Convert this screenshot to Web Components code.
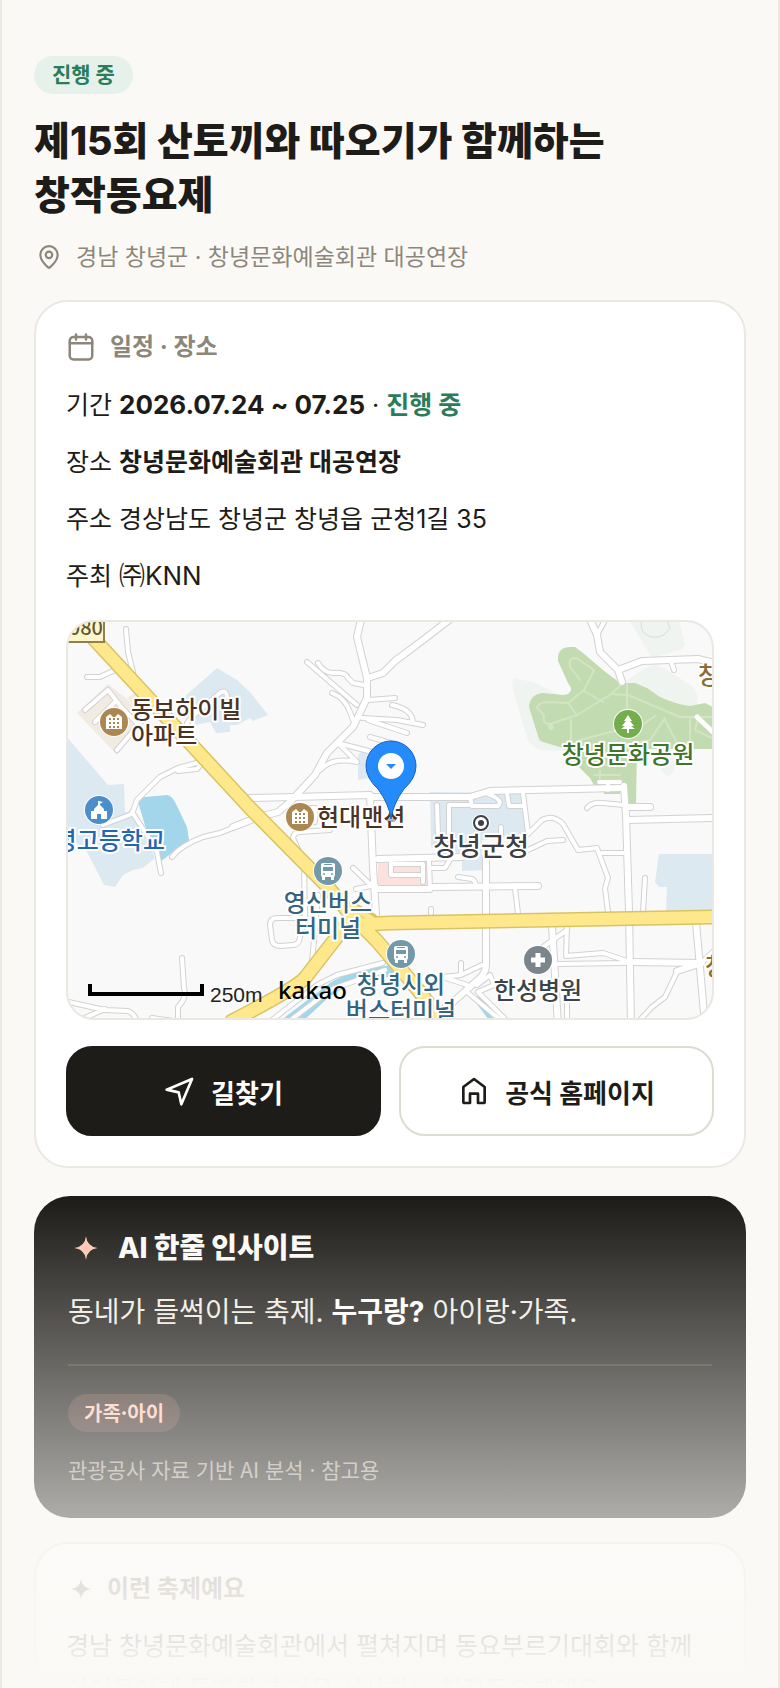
<!DOCTYPE html>
<html lang="ko">
<head>
<meta charset="UTF-8">
<meta name="viewport" content="width=device-width, initial-scale=1">
<title>제15회 산토끼와 따오기가 함께하는 창작동요제</title>
<style>
  body {
    margin: 0;
    background: #fbf9f6;
    color: #1e1c18;
    font-family: Inter, "Noto Sans CJK KR", sans-serif;
    word-break: keep-all;
  }
</style>
</head>
<body>

<festival-page>
  <festival-header badge="진행 중" place="경남 창녕군 · 창녕문화예술회관 대공연장">제15회 산토끼와 따오기가 함께하는 창작동요제</festival-header>

  <info-card heading="일정 · 장소" icon="calendar">
    <info-row label="기간"><b class="latin">2026.07.24 ~ 07.25</b> · <b class="live">진행 중</b></info-row>
    <info-row label="장소"><b>창녕문화예술회관 대공연장</b></info-row>
    <info-row label="주소">경상남도 창녕군 창녕읍 군청1길 35</info-row>
    <info-row label="주최"><span class="latin">㈜KNN</span></info-row>
    <place-map slot="media"></place-map>
    <action-button slot="actions" icon="send" primary>길찾기</action-button>
    <action-button slot="actions" icon="home" href="#home">공식 홈페이지</action-button>
  </info-card>

  <insight-card heading="AI 한줄 인사이트" tag="가족·아이" note="관광공사 자료 기반 AI 분석 · 참고용">동네가 들썩이는 축제. <b>누구랑?</b> 아이랑·가족.</insight-card>

  <info-card heading="이런 축제예요" icon="spark">
    <info-text>경남 창녕문화예술회관에서 펼쳐지며 동요부르기대회와 함께 아이들에게 특별한 추억을 선사하는 창작동요제예요.</info-text>
  </info-card>
</festival-page>

<template id="place-map">
  <style>
    :host {
      display: block;
      border: 2px solid #ebe7e1;
      border-radius: 28px;
      overflow: hidden;
      background: #f9f9f9;
    }
    svg { display: block; width: 100%; height: auto; }
    text {
      font-family: "Noto Sans CJK KR", sans-serif;
      font-size: 24px;
      font-weight: 500;
      stroke: #fff;
      stroke-width: 4px;
      stroke-linejoin: round;
      paint-order: stroke;
    }
    .mid { text-anchor: middle; }
    .end { text-anchor: end; }
    .big { font-size: 26px; }
    .home { fill: #4b3324; }
    .bus { fill: #336580; }
    .shop { fill: #8a6c38; }
    .plain { stroke: none; font-weight: 400; }
    .scale { font-family: "Liberation Sans", sans-serif; font-size: 21px; }
    .brand { font-family: "Noto Sans", sans-serif; font-weight: 500; }
    .lines { fill: none; stroke-linecap: round; stroke-linejoin: round; }
  </style>
  <svg viewBox="68 622 644 396" role="img" aria-label="창녕문화예술회관 지도">
    <defs>
      <g id="wide">
        <path d="M362 615L357 637L367 678V698L353 727L327 753L315 775L290 802L278 812L256 818L233 827"/>
        <path d="M449 620L427 637L395 661L383 673L368 678"/>
        <path d="M250 798L370 795L373 867L376 914"/>
        <path d="M374 797L470 797L490 791L620 788"/>
        <path d="M624 786L626 815L629 912L631 1025"/>
        <path d="M486 858V965Q486 972 480 978L453 1002L436 1014"/>
        <path d="M628 807H650M628 820L715 818M633 962L702 963L677 971"/>
        <path d="M552 926L558 1025M696 922L705 1025"/>
        <path d="M377 889H427M432 887L538 886M378 859L462 857"/>
        <path d="M588 615L597 635L600 652L618 670L622 682M618 670L642 661L698 659L715 663"/>
      </g>
      <g id="narrow">
        <path d="M126 629L128 652L133 672M87 677H100L115 670"/>
        <path d="M85 710L108 690L122 708L139 725M95 722L116 701M117 750L141 722"/>
        <path d="M187 723L192 717L221 692Q227 690 227 697"/>
        <path d="M200 762L178 768L160 777L137 800L132 814L103 825M178 771L197 769L203 762"/>
        <path d="M132 812L147 835L157 852L161 873"/>
        <path d="M172 857Q180 846 203 837L220 833L257 818"/>
        <path d="M307 662L357 705M318 663Q324 673 333 673Q346 672 348 678L353 683L364 685"/>
        <path d="M332 693Q345 698 350 712L355 725M368 700L395 698"/>
        <path d="M362 718L397 720L423 725M392 705Q412 709 413 722M368 720L407 733"/>
        <path d="M370 737L397 745M338 743L372 752M320 770Q332 757 357 762L338 743"/>
        <path d="M597 635L604 622M671 661L674 670"/>
        <path d="M305 918H277Q270 918 270 925L272 940Q273 946 280 946L293 945Q299 945 300 937L305 918L304 863L293 838Q294 832 300 832L330 830"/>
        <path d="M318 895L312 962M182 958L184 988Q187 998 178 1007V1025"/>
        <path d="M64 1001L105 1010L128 1011Q135 1014 137 1022M80 1020L105 1009M152 1018L180 1022"/>
        <path d="M353 868L373 887M356 889L376 885M290 815Q296 807 315 808V822"/>
        <path d="M587 808Q592 802 602 803L624 805M599 782H620M608 782V790M624 785V800"/>
        <path d="M470 797L472 806L498 806Q504 800 488 794M449 834V805H471M437 805L438 835M507 793L509 806H523M523 793L528 833M501 827V835"/>
        <path d="M391 863V875H421M393 864H423V882M429 860L430 890"/>
        <path d="M432 868H445L451 858M458 877L472 879Q476 881 476 887"/>
        <path d="M515 888L518 913M431 909V913M645 878L643 912"/>
        <path d="M528 834L542 820Q553 814 563 824L578 850L597 848L608 878L605 888L608 912M528 850L547 841L563 840M602 853H623"/>
        <path d="M567 926L566 956L603 953L627 961M557 964L627 963M543 947L567 930M567 995V1020"/>
        <path d="M677 972L665 997L652 1007L640 1020M702 962L715 950"/>
        <path d="M272 1020L317 985L337 975L383 963M283 1026L330 990L385 970"/>
        <path d="M461 963V975L443 977L467 985M461 975L482 965M467 992L505 1024M477 985L490 975L494 985L478 992L510 1024"/>
      </g>
      <g id="main">
        <path d="M70 613L250 808L328 887L350 914L377 941L410 980L450 1030"/>
        <path d="M348 925Q370 924 390 923L550 920L718 917"/>
        <path d="M350 920L305 978Q296 988 232 1021"/>
      </g>
      <g id="apartment">
        <circle r="15" fill="#fff"/><circle r="14" fill="#ad8751"/>
        <path fill="#fff" d="M-8 7V-5L-4 -8L-1 -5H1L4 -8L8 -5V7Z"/>
        <path stroke="#ad8751" stroke-width="2" stroke-dasharray="2 2" d="M-5 -3H6M-5 1H6M-5 5H6"/>
      </g>
      <g id="bus">
        <circle r="15" fill="#fff"/><circle r="14" fill="#7299a9"/>
        <rect x="-7" y="-8" width="14" height="14" rx="2" fill="#fff"/>
        <path fill="#fff" d="M-6 5H-3V9H-6ZM3 5H6V9H3Z"/>
        <path fill="#7299a9" d="M-4 -7H4V-6H-4ZM-5 -4H5V0H-5Z"/>
        <circle cx="-4" cy="3" r="1" fill="#7299a9"/><circle cx="4" cy="3" r="1" fill="#7299a9"/>
      </g>
    </defs>

    <!-- land use -->
    <g fill="#dce9f1">
      <path d="M60 729L108 785L124 784L125 812L137 814L155 858L143 868L133 870L123 875L115 887L104 885L87 852L60 830Z"/>
      <path d="M217 668L237 680L250 692L268 715L253 721L250 718L237 725L230 725V732L216 733L210 722L196 725L183 698Z"/>
      <path d="M358 755L363 750L374 762V777L358 780Z"/>
      <path d="M430 792L523 793L527 833L500 838L482 840V870L462 871V857L431 847Z"/>
      <path d="M659 854H715V911H666L667 887H659L655 882Z"/>
    </g>
    <path fill="#f1ebe1" d="M77 713L108 684L143 712L140 725L117 755ZM127 698L140 690L150 702L142 712Z"/>
    <path fill="#fbe2df" d="M378 863L428 861V885L378 886Z"/>
    <g fill="#eff4f1">
      <path d="M513 678L533 682L560 695L575 720L563 751L540 750Q531 747 527 738L512 686Z"/>
      <path d="M629 620H679L685 645L680 650L652 658Z"/>
      <path d="M620 685L647 667Q655 663 664 668L693 687L698 697L696 708L660 702Z"/>
      <path d="M655 750H678Q676 776 668 776Q660 775 655 750Z"/>
    </g>
    <path fill="none" stroke="#d8dcda" d="M641 622Q641 631 645 634Q654 640 664 635L670 628L667 620"/>
    <path fill="#a3d6ea" d="M138 802Q139 797 145 797L167 795Q171 795 175 802L187 827L189 840L160 862L147 832Z"/>
    <path fill="#a3d6ea" d="M276 1024L330 983Q350 970 385 966L405 962L400 975L350 984L330 996L300 1024ZM470 995L480 997L499 1020H489Z"/>
    <path fill="#c3dbb0" d="M568 683L558 661Q557 647 570 647H575L583 653L603 670L620 683H635L647 688L660 697Q675 704 690 706L705 703L715 708V749H637L636 804H627L626 788H620V794H604V787H595L590 778L577 765L563 748L543 742Q539 741 538 736L529 707Q530 694 543 693L563 695Q572 694 571 688Z"/>
    <g class="lines" stroke="#d2e4c4" stroke-width="2">
      <path d="M622 684L610 695L577 715L550 724Q542 724 544 715L537 708Q538 702 549 702L568 703L573 710L577 716"/>
      <path d="M568 703L584 690L594 670L578 659Q568 656 570 667L580 680M584 691L603 702M610 694L628 695L680 717H712"/>
      <path d="M571 720L571 745M627 684V710M655 716L635 730L610 732L580 740M665 718L650 740L625 745M690 718V748M699 715L695 730L712 738M665 720L678 745"/>
      <path d="M592 765H625M594 775H620M600 770V782"/>
    </g>
    <circle cx="551" cy="727" r="3" fill="#d2e4c4"/>

    <!-- streets: casing first, surface on top -->
    <g class="lines">
      <use href="#narrow" stroke="#d2d2d2" stroke-width="6"/>
      <use href="#wide" stroke="#d2d2d2" stroke-width="8"/>
      <use href="#narrow" stroke="#fff" stroke-width="4"/>
      <use href="#wide" stroke="#fff" stroke-width="6"/>
      <path d="M697 717L714 733" stroke="#fff" stroke-width="5"/>
      <path d="M372 930V940M352 906L373 918" stroke="#d9c462" stroke-width="9"/>
      <use href="#main" stroke="#d9c462" stroke-width="15"/>
      <use href="#main" stroke="#ffe88c" stroke-width="12"/>
      <path d="M372 930V940M352 906L373 920" stroke="#ffe88c" stroke-width="6"/>
    </g>

    <path fill="#fdf6cb" stroke="#91804f" stroke-width="2" d="M60 615H104V642H60Z"/>
    <text class="end" x="103" y="635" fill="#655a32" style="font-size: 20px; stroke: none">1080</text>

    <text class="home" x="131" y="718">동보하이빌</text>
    <text class="home" x="131" y="744">아파트</text>
    <text class="home" x="317" y="826">현대맨션</text>
    <text class="mid" x="628" y="763" fill="#40752a">창녕문화공원</text>
    <text class="mid big" x="481" y="856" fill="#3c4044">창녕군청</text>
    <text class="mid" x="538" y="999" fill="#39444b">한성병원</text>
    <text class="end" x="165" y="849" fill="#2068b4">창녕고등학교</text>
    <text class="mid bus" x="328" y="911">영신버스</text>
    <text class="mid bus" x="328" y="937">터미널</text>
    <text class="mid bus" x="401" y="993">창녕시외</text>
    <text class="mid bus" x="401" y="1019">버스터미널</text>
    <text class="shop" x="698" y="684">창녕</text>
    <text class="shop" x="705" y="975">창녕</text>

    <use href="#apartment" x="114" y="722"/>
    <use href="#apartment" x="300" y="817"/>
    <use href="#bus" x="328" y="871"/>
    <use href="#bus" x="401" y="954"/>
    <g transform="translate(99 810)">
      <circle r="15" fill="#fff"/><circle r="14" fill="#4c8ecb"/>
      <path fill="#fff" d="M0 -9L4 -8L1 -6V-5L5 -1V1H8V9H2V4H-2V9H-8V1H-5V-1L-1 -5V-9Z"/>
    </g>
    <g transform="translate(538 960)">
      <circle r="15" fill="#fff"/><circle r="14" fill="#7a868b"/>
      <path stroke="#fff" stroke-width="5" d="M-7 0H7M0 -7V7"/>
    </g>
    <g transform="translate(628 724)">
      <circle r="15" fill="#fff"/><circle r="14" fill="#73ad4c"/>
      <path fill="#fff" d="M0 -9L4 -3H2L6 2H3L7 5H1V9H-1V5H-7L-3 2H-6L-2 -3H-4Z"/>
    </g>
    <circle cx="481" cy="823" r="9" fill="#fff"/>
    <circle cx="481" cy="823" r="7" fill="#fff" stroke="#3c4044" stroke-width="2"/>
    <circle cx="481" cy="823" r="3" fill="#3c4044"/>

    <!-- venue pin -->
    <ellipse cx="391" cy="820" rx="5" ry="2" fill="#000" opacity=".3"/>
    <path fill="#258bfb" stroke="#1a62c4" d="M391 819Q389 804 378 789Q366 778 366 766A25 25 0 0 1 416 766Q416 778 404 789Q393 804 391 819Z"/>
    <circle cx="391" cy="766" r="13" fill="#fff"/>
    <path fill="#258bfb" d="M386 764H396L391 769Z"/>

    <path fill="none" stroke="#000" stroke-width="4" d="M90 984V994H202V984"/>
    <text class="plain scale" x="210" y="1002" fill="#222">250m</text>
    <text class="plain brand" x="278" y="999">kakao</text>
  </svg>
</template>

<script>
  const ICONS = {
    pin: '<path d="M20 10c0 5-5.500 10.200-7.400 11.800a1 1 0 0 1-1.200 0C9.500 20.200 4 15 4 10a8 8 0 0 1 16 0"/><circle cx="12" cy="10" r="3"/>',
    calendar: '<path d="M8 2v4M16 2v4M3 9h18"/><rect x="3" y="4" width="18" height="18" rx="3"/>',
    send: '<path d="M2 11L21 3L13 22L11 13Z"/>',
    home: '<path d="M4 9L12 3L20 9V20a1 1 0 0 1-1 1H15V14H9V21H5a1 1 0 0 1-1-1Z"/>',
    spark: '<path fill="currentColor" stroke="none" d="M12 2Q13 11 22 12Q13 13 12 22Q11 13 2 12Q11 11 12 2Z"/>',
  };

  function icon(name, size) {
    return `<svg class="${name}" width="${size}" height="${size}" viewBox="0 0 24 24" fill="none" stroke="currentColor" stroke-width="2" stroke-linecap="round" stroke-linejoin="round" aria-hidden="true">${ICONS[name]}</svg>`;
  }

  class FestivalPage extends HTMLElement {
    connectedCallback() {
      const shadow = this.attachShadow({ mode: 'open' });
      shadow.innerHTML = `
        <style>
          :host {
            display: block;
            position: relative;
            box-sizing: border-box;
            height: 100vh;
            overflow: hidden;
            padding: 56px 32px 0;
            border: solid #ebe9e2;
            border-width: 0 2px;
          }
          /* fades the page out towards the bottom of the window */
          .fade {
            position: absolute;
            inset: auto -2px 0;
            height: 490px;
            background: linear-gradient(#fbf9f600, #fbf9f6);
            pointer-events: none;
          }
        </style>
        <main><slot></slot></main>
        <div class="fade"></div>
      `;
    }
  }

  class FestivalHeader extends HTMLElement {
    connectedCallback() {
      const shadow = this.attachShadow({ mode: 'open' });
      shadow.innerHTML = `
        <style>
          :host {
            display: block;
            margin-bottom: 26px;
          }
          .badge {
            display: inline-block;
            padding: 0 18px;
            border-radius: 19px;
            background: #e7f1ec;
            color: #2a7d5a;
            font-size: 21px;
            font-weight: 700;
            line-height: 38px;
            vertical-align: top;
          }
          h1 {
            margin: 20px 0 18px;
            font-size: 39px;
            font-weight: 800;
            line-height: 54px;
          }
          .place {
            display: flex;
            align-items: center;
            gap: 14px;
            margin: 0;
            padding-left: 2px;
            color: #8d877b;
            font-size: 23px;
            line-height: 34px;
          }
        </style>
        <span class="badge">${this.getAttribute('badge')}</span>
        <h1><slot></slot></h1>
        <p class="place">${icon('pin', 26)}<span>${this.getAttribute('place')}</span></p>
      `;
    }
  }

  class InfoCard extends HTMLElement {
    connectedCallback() {
      const shadow = this.attachShadow({ mode: 'open' });
      shadow.innerHTML = `
        <style>
          :host {
            display: block;
            margin-bottom: 28px;
            padding: 30px;
            border: 2px solid #ebe8e1;
            border-radius: 34px;
            background: #fff;
          }
          h2 {
            display: flex;
            align-items: center;
            gap: 14px;
            margin: 0 0 20px;
            color: #8d877b;
            font-size: 24px;
            font-weight: 700;
            line-height: 30px;
          }
          .spark {
            width: 24px;
            margin-left: 3px;
          }
          .rows {
            display: flex;
            flex-direction: column;
            gap: 11px;
          }
          ::slotted([slot="media"]) { margin-top: 21px; }
          .actions {
            display: flex;
            gap: 18px;
          }
          ::slotted([slot="actions"]) { flex: 1; margin-top: 26px; }
        </style>
        <h2>${icon(this.getAttribute('icon'), 30)}${this.getAttribute('heading')}</h2>
        <div class="rows"><slot></slot></div>
        <slot name="media"></slot>
        <div class="actions"><slot name="actions"></slot></div>
      `;
    }
  }

  class InfoRow extends HTMLElement {
    connectedCallback() {
      const shadow = this.attachShadow({ mode: 'open' });
      shadow.innerHTML = `
        <style>
          :host {
            display: block;
            font-size: 25px;
            line-height: 46px;
          }
          ::slotted(.latin) {
            font-size: 26px;
            line-height: 1;
          }
          ::slotted(.live) { color: #2a7d5a; }
        </style>
        <span>${this.getAttribute('label')}</span>
        <slot></slot>
      `;
    }
  }

  class InfoText extends HTMLElement {
    connectedCallback() {
      const shadow = this.attachShadow({ mode: 'open' });
      shadow.innerHTML = `
        <style>
          :host {
            display: block;
            font-size: 25px;
            line-height: 44px;
          }
        </style>
        <slot></slot>
      `;
    }
  }

  class ActionButton extends HTMLElement {
    connectedCallback() {
      const shadow = this.attachShadow({ mode: 'open' });
      const href = this.getAttribute('href');
      const tag = href ? 'a' : 'button';
      shadow.innerHTML = `
        <style>
          :host { display: block; }
          a, button {
            display: flex;
            align-items: center;
            justify-content: center;
            gap: 15px;
            box-sizing: border-box;
            width: 100%;
            height: 90px;
            padding: 0;
            border: 2px solid #dedbd2;
            border-radius: 26px;
            background: #fff;
            color: #1e1c18;
            font: inherit;
            font-size: 26px;
            font-weight: 700;
            text-decoration: none;
            cursor: pointer;
          }
          :host([primary]) button {
            border-color: #1e1c18;
            background: #1e1c18;
            color: #fff;
          }
        </style>
        <${tag} ${href ? `href="${href}"` : 'type="button"'}>${icon(this.getAttribute('icon'), 32)}<span><slot></slot></span></${tag}>
      `;
    }
  }

  class InsightCard extends HTMLElement {
    connectedCallback() {
      const shadow = this.attachShadow({ mode: 'open' });
      shadow.innerHTML = `
        <style>
          :host {
            display: block;
            margin-bottom: 24px;
            padding: 34px;
            border-radius: 36px;
            background: #1e1c18;
            color: #f0ece2;
          }
          h2 {
            display: flex;
            align-items: center;
            gap: 18px;
            margin: 0 0 22px;
            padding-left: 4px;
            color: #fbf9f6;
            font-size: 28px;
            font-weight: 800;
            line-height: 36px;
          }
          h2 svg { color: #ffc4b0; }
          p {
            margin: 0 0 28px;
            font-size: 28px;
            line-height: 48px;
          }
          ::slotted(b) { color: #fff; }
          .meta {
            padding-top: 28px;
            border-top: 2px solid #39372f;
          }
          .tag {
            display: inline-block;
            padding: 0 16px;
            border-radius: 19px;
            background: #42302a;
            color: #ffc9b8;
            font-family: "Noto Sans CJK KR", sans-serif;
            font-size: 20px;
            font-weight: 600;
            line-height: 38px;
            vertical-align: top;
          }
          small {
            display: block;
            margin-top: 22px;
            color: #a39d91;
            font-family: "Noto Sans CJK KR", sans-serif;
            font-size: 21px;
            line-height: 30px;
          }
        </style>
        <h2>${icon('spark', 28)}${this.getAttribute('heading')}</h2>
        <p><slot></slot></p>
        <div class="meta">
          <span class="tag">${this.getAttribute('tag')}</span>
          <small>${this.getAttribute('note')}</small>
        </div>
      `;
    }
  }

  class PlaceMap extends HTMLElement {
    connectedCallback() {
      const template = document.getElementById('place-map');
      const shadow = this.attachShadow({ mode: 'open' });
      shadow.appendChild(template.content.cloneNode(true));
    }
  }

  customElements.define('festival-page', FestivalPage);
  customElements.define('festival-header', FestivalHeader);
  customElements.define('info-card', InfoCard);
  customElements.define('info-row', InfoRow);
  customElements.define('info-text', InfoText);
  customElements.define('action-button', ActionButton);
  customElements.define('insight-card', InsightCard);
  customElements.define('place-map', PlaceMap);
</script>
</body>
</html>
